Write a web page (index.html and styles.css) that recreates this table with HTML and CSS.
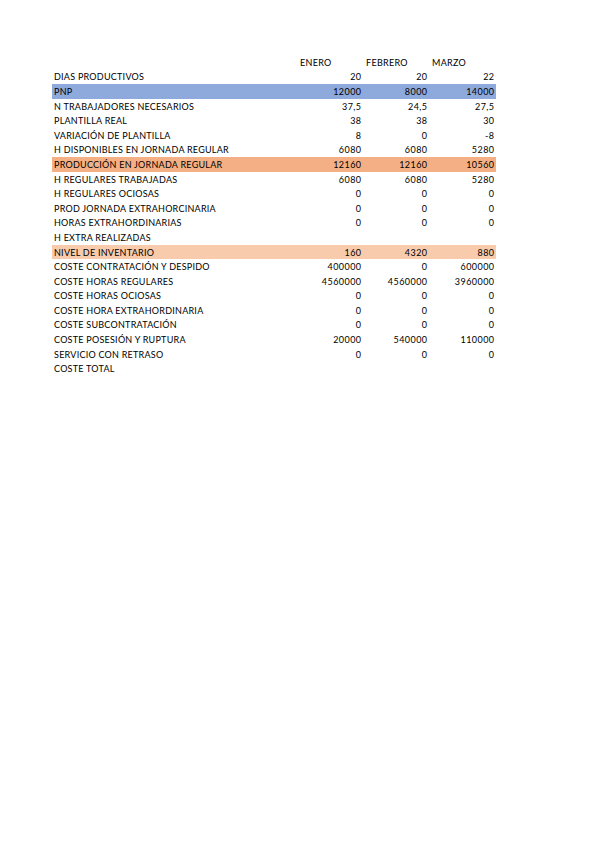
FILE: index.html
```html
<!DOCTYPE html>
<html lang="es">
<head>
<meta charset="utf-8">
<title>Plan agregado</title>
<link rel="stylesheet" href="styles.css">
</head>
<body>
<div class="sheet">
  <div class="row head"><div class="lbl"></div><div class="h">ENERO</div><div class="h">FEBRERO</div><div class="h">MARZO</div></div>
  <div class="row"><div class="lbl">DIAS PRODUCTIVOS</div><div class="n">20</div><div class="n">20</div><div class="n">22</div></div>
  <div class="row blue"><div class="lbl">PNP</div><div class="n">12000</div><div class="n">8000</div><div class="n">14000</div></div>
  <div class="row"><div class="lbl">N TRABAJADORES NECESARIOS</div><div class="n">37,5</div><div class="n">24,5</div><div class="n">27,5</div></div>
  <div class="row"><div class="lbl">PLANTILLA REAL</div><div class="n">38</div><div class="n">38</div><div class="n">30</div></div>
  <div class="row"><div class="lbl">VARIACIÓN DE PLANTILLA</div><div class="n">8</div><div class="n">0</div><div class="n">-8</div></div>
  <div class="row"><div class="lbl">H DISPONIBLES EN JORNADA REGULAR</div><div class="n">6080</div><div class="n">6080</div><div class="n">5280</div></div>
  <div class="row orange"><div class="lbl">PRODUCCIÓN EN JORNADA REGULAR</div><div class="n">12160</div><div class="n">12160</div><div class="n">10560</div></div>
  <div class="row"><div class="lbl">H REGULARES TRABAJADAS</div><div class="n">6080</div><div class="n">6080</div><div class="n">5280</div></div>
  <div class="row"><div class="lbl">H REGULARES OCIOSAS</div><div class="n">0</div><div class="n">0</div><div class="n">0</div></div>
  <div class="row"><div class="lbl">PROD JORNADA EXTRAHORCINARIA</div><div class="n">0</div><div class="n">0</div><div class="n">0</div></div>
  <div class="row"><div class="lbl">HORAS EXTRAHORDINARIAS</div><div class="n">0</div><div class="n">0</div><div class="n">0</div></div>
  <div class="row"><div class="lbl">H EXTRA REALIZADAS</div><div class="n"></div><div class="n"></div><div class="n"></div></div>
  <div class="row peach"><div class="lbl">NIVEL DE INVENTARIO</div><div class="n">160</div><div class="n">4320</div><div class="n">880</div></div>
  <div class="row"><div class="lbl">COSTE CONTRATACIÓN Y DESPIDO</div><div class="n">400000</div><div class="n">0</div><div class="n">600000</div></div>
  <div class="row"><div class="lbl">COSTE HORAS REGULARES</div><div class="n">4560000</div><div class="n">4560000</div><div class="n">3960000</div></div>
  <div class="row"><div class="lbl">COSTE HORAS OCIOSAS</div><div class="n">0</div><div class="n">0</div><div class="n">0</div></div>
  <div class="row"><div class="lbl">COSTE HORA EXTRAHORDINARIA</div><div class="n">0</div><div class="n">0</div><div class="n">0</div></div>
  <div class="row"><div class="lbl">COSTE SUBCONTRATACIÓN</div><div class="n">0</div><div class="n">0</div><div class="n">0</div></div>
  <div class="row"><div class="lbl">COSTE POSESIÓN Y RUPTURA</div><div class="n">20000</div><div class="n">540000</div><div class="n">110000</div></div>
  <div class="row"><div class="lbl">SERVICIO CON RETRASO</div><div class="n">0</div><div class="n">0</div><div class="n">0</div></div>
  <div class="row"><div class="lbl">COSTE TOTAL</div><div class="n"></div><div class="n"></div><div class="n"></div></div>
</div>
</body>
</html>
```

FILE: styles.css
```css
html, body {
  margin: 0;
  padding: 0;
  background: #ffffff;
}
.sheet {
  margin: 55px 0 0 52px;
  width: 444px;
  font-family: Lato, "Open Sans", "Liberation Sans", sans-serif;
  font-size: 9px;
  color: #000000;
}
.row {
  display: grid;
  grid-template-columns: 245px 66px 66px 67px;
  height: 14.6px;
  align-items: center;
  white-space: nowrap;
}
.lbl {
  padding-left: 2px;
  letter-spacing: 0.25px;
}
.h {
  padding-left: 3px;
  letter-spacing: 0.3px;
}
.n {
  text-align: right;
  padding-right: 1.5px;
  letter-spacing: 0.45px;
}
.blue {
  background: #8ea9db;
}
.orange {
  background: #f4b084;
}
.peach {
  background: #f8cbad;
}
```
